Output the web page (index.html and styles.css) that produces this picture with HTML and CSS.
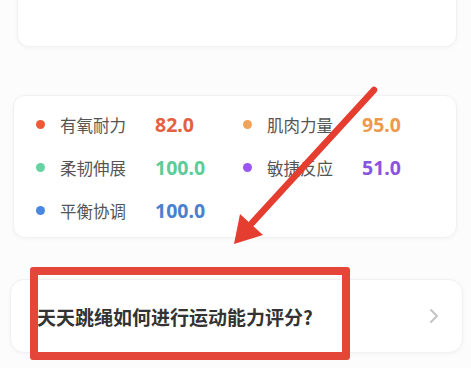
FILE: index.html
```html
<!DOCTYPE html>
<html lang="zh-CN">
<head>
    <meta charset="UTF-8">
    <meta name="viewport" content="width=device-width, initial-scale=1.0">
    <title>运动能力</title>
    <link rel="stylesheet" href="styles.css">
</head>
<body>
<div class="page">
    <div class="card top-card"></div>

    <div class="card stats">
        <div class="stat">
            <span class="dot red"></span>
            <span class="label">有氧耐力</span>
            <span class="value red">82.0</span>
        </div>
        <div class="stat">
            <span class="dot orange"></span>
            <span class="label">肌肉力量</span>
            <span class="value orange">95.0</span>
        </div>
        <div class="stat">
            <span class="dot green"></span>
            <span class="label">柔韧伸展</span>
            <span class="value green">100.0</span>
        </div>
        <div class="stat">
            <span class="dot purple"></span>
            <span class="label">敏捷反应</span>
            <span class="value purple">51.0</span>
        </div>
        <div class="stat">
            <span class="dot blue"></span>
            <span class="label">平衡协调</span>
            <span class="value blue">100.0</span>
        </div>
    </div>

    <div class="card faq">
        <span class="faq-title">天天跳绳如何进行运动能力评分?</span>
        <svg class="chevron" width="12" height="16" viewBox="0 0 12 16">
            <path d="M3 2 L9 8 L3 14" fill="none" stroke="#c4c4c4" stroke-width="2" stroke-linecap="round" stroke-linejoin="round"/>
        </svg>
    </div>

    <!-- annotation overlays -->
    <svg class="arrow" width="471" height="368" viewBox="0 0 471 368">
        <line x1="374" y1="90" x2="252" y2="223" stroke="#e53e30" stroke-width="6.5" stroke-linecap="round"/>
        <polygon points="234,244 240,214 263,235" fill="#e53e30"/>
    </svg>
    <div class="highlight"></div>
</div>
</body>
</html>
```

FILE: styles.css
```css
body {
    margin: 0;
    background: #fcfcfc;
    font-family: "Noto Sans", "Noto Sans CJK SC", sans-serif;
}

.page {
    position: relative;
    width: 471px;
    height: 368px;
    overflow: hidden;
}

.card {
    background: #fff;
    border: 1px solid #f1f1f1;
    border-radius: 12px;
    box-shadow: 0 1px 4px rgba(0, 0, 0, 0.04);
}

.top-card {
    margin: -30px 14px 0 17px;
    height: 75px;
}

.stats {
    margin: 48px 14px 0 13px;
    padding: 7px 0 5px 22px;
    display: grid;
    grid-template-columns: 207px 1fr;
}

.stat {
    height: 43px;
    display: flex;
    align-items: center;
}

.dot {
    width: 9px;
    height: 9px;
    border-radius: 50%;
    margin-right: 15px;
}

.label {
    width: 95px;
    font-family: "Noto Sans CJK SC", sans-serif;
    font-size: 16.5px;
    color: #555;
}

.value {
    font-size: 19.5px;
    font-weight: 700;
}

.dot.red { background: #ee5a36; }
.dot.orange { background: #f2a35a; }
.dot.green { background: #66d3a0; }
.dot.purple { background: #9b55f0; }
.dot.blue { background: #4a88e0; }

.value.red { color: #e4603e; }
.value.orange { color: #eb9a4e; }
.value.green { color: #5ccc98; }
.value.purple { color: #8c52e0; }
.value.blue { color: #4a80cf; }

.faq {
    margin: 41px 8px 0 10px;
    height: 72px;
    padding: 0 22px 0 26px;
    display: flex;
    align-items: center;
    justify-content: space-between;
    border-radius: 14px;
}

.faq-title {
    font-family: "Noto Sans CJK SC", sans-serif;
    font-size: 19px;
    font-weight: 700;
    color: #333;
}

.arrow {
    position: absolute;
    left: 0;
    top: 0;
}

.highlight {
    position: absolute;
    left: 30px;
    top: 267px;
    width: 304px;
    height: 77px;
    border: 8px solid #e5463a;
    border-radius: 3px;
}
```
